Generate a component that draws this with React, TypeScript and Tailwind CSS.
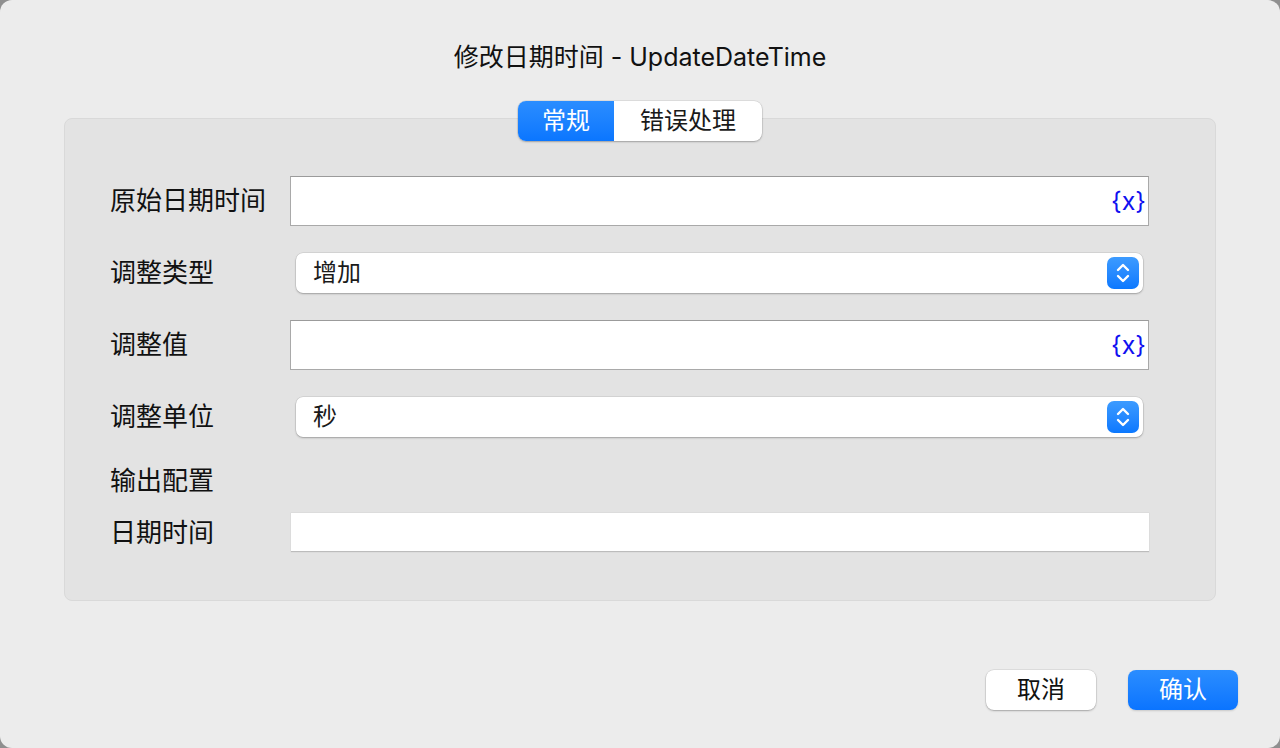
const cjk = "font-['Inter','Noto_Sans_CJK_SC',sans-serif]";

function Stepper() {
  return (
    <div className="flex h-[32px] w-[32px] items-center justify-center rounded-[7px] bg-gradient-to-b from-[#3c9bff] to-[#0a78ff]">
      <svg width="16" height="22" viewBox="0 0 16 22" fill="none" stroke="white" strokeWidth="2.4" strokeLinecap="round" strokeLinejoin="round">
        <path d="M3 8 L8 3 L13 8" />
        <path d="M3 14 L8 19 L13 14" />
      </svg>
    </div>
  );
}

function VarInput() {
  return (
    <div className="flex h-[50px] flex-1 items-center justify-end border border-[#a9a9a9] border-t-[#9b9b9b] bg-white pr-[2px]">
      <span className="font-['Inter',sans-serif] text-[25px] leading-none text-[#1010f0]">{"{x}"}</span>
    </div>
  );
}

function Select({ value }: { value: string }) {
  return (
    <div className="mx-[6px] flex h-[40px] flex-1 items-center justify-between rounded-[7px] bg-white pl-[17px] pr-[4px] shadow-[0_0_0_0.5px_rgba(0,0,0,0.12),0_1px_2px_rgba(0,0,0,0.25)]">
      <span className="text-[24px] leading-none text-[#1a1a1a]">{value}</span>
      <Stepper />
    </div>
  );
}

function Row({ label, children, className = "" }: { label: string; children: React.ReactNode; className?: string }) {
  return (
    <div className={`flex items-center ${className}`}>
      <div className="w-[180px] shrink-0 text-[26px] leading-none text-[#111]">{label}</div>
      {children}
    </div>
  );
}

export default function App() {
  return (
    <div className={`h-[748px] w-[1280px] bg-[#8f8f8f] ${cjk}`}>
      <div className="flex h-full flex-col rounded-[12px] bg-[#ececec]">
        {/* Title */}
        <h1 className="mt-[41px] text-center text-[25px] leading-[32px] text-[#111]">
          修改日期时间 - UpdateDateTime
        </h1>

        {/* Tabs */}
        <div className="relative z-10 mt-[28px] flex justify-center">
          <div className="flex h-[40px] overflow-hidden rounded-[8px] bg-white shadow-[0_0_0_0.5px_rgba(0,0,0,0.12),0_1px_2px_rgba(0,0,0,0.25)]">
            <div className="flex w-[96px] items-center justify-center bg-gradient-to-b from-[#2a8dff] to-[#0a76ff] text-[24px] text-white">
              常规
            </div>
            <div className="flex w-[148px] items-center justify-center text-[24px] text-[#1a1a1a]">
              错误处理
            </div>
          </div>
        </div>

        {/* Panel */}
        <div className="mx-[64px] -mt-[23px] rounded-[8px] border border-[#d9d9d9] bg-[#e3e3e3] pb-[48px] pl-[45px] pr-[66px] pt-[57px]">
          <Row label="原始日期时间">
            <VarInput />
          </Row>
          <Row label="调整类型" className="mt-[27px]">
            <Select value="增加" />
          </Row>
          <Row label="调整值" className="mt-[27px]">
            <VarInput />
          </Row>
          <Row label="调整单位" className="mt-[27px]">
            <Select value="秒" />
          </Row>
          <div className="mt-[26px] text-[26px] leading-[36px] text-[#111]">输出配置</div>
          <Row label="日期时间" className="mt-[14px]">
            <div className="ml-[1px] h-[39px] flex-1 border-b border-[#bcbcbc] bg-white shadow-[0_0_0_0.5px_rgba(0,0,0,0.06)]" />
          </Row>
        </div>

        {/* Footer */}
        <div className="mt-auto flex justify-end gap-[32px] pb-[38px] pr-[42px]">
          <button className="h-[40px] w-[110px] rounded-[8px] bg-white text-[24px] text-[#111] shadow-[0_0_0_0.5px_rgba(0,0,0,0.12),0_1px_2px_rgba(0,0,0,0.25)]">
            取消
          </button>
          <button className="h-[40px] w-[110px] rounded-[8px] bg-gradient-to-b from-[#2a8dff] to-[#0a74ff] text-[24px] text-white shadow-[0_1px_2px_rgba(0,0,0,0.15)]">
            确认
          </button>
        </div>
      </div>
    </div>
  );
}
